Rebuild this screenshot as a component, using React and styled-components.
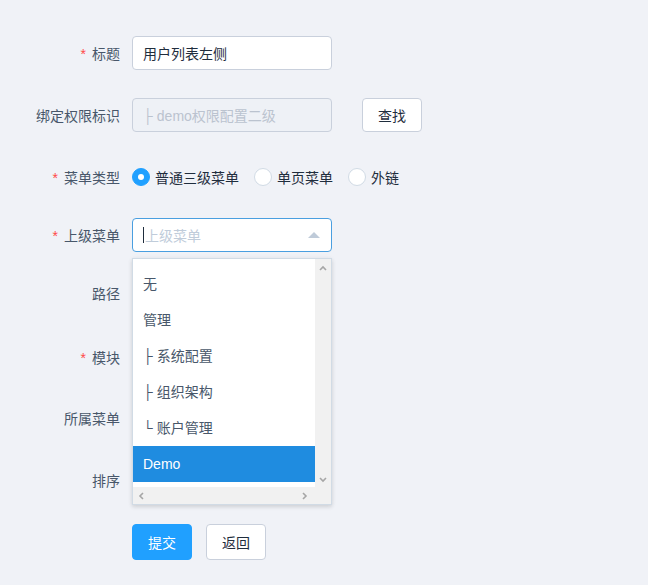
import React from "react"
import styled, { createGlobalStyle } from "styled-components"

const GlobalStyle = createGlobalStyle`
  html, body {
    margin: 0;
    padding: 0;
    background: #f0f2f7;
  }
  body {
    font-family: "Liberation Sans", "Noto Sans CJK SC", sans-serif;
    font-size: 14px;
    color: #1f2d3d;
  }
`

const Page = styled.div`
  padding: 36px 0 0 0;
  width: 648px;
  height: 585px;
  box-sizing: border-box;
  overflow: hidden;
`

const Row = styled.div`
  display: flex;
  align-items: center;
  height: ${p => p.h || 34}px;
  margin-bottom: ${p => p.mb ?? 28}px;
  position: relative;
`

const Label = styled.label`
  width: 120px;
  padding-right: 12px;
  box-sizing: content-box;
  text-align: right;
  color: #48576a;
  font-size: 14px;
  flex-shrink: 0;
  margin-top: ${p => p.dy || 0}px;
`

const Star = styled.span`
  color: #ff4949;
  margin-right: 6px;
`

const Input = styled.div`
  width: 200px;
  height: 34px;
  box-sizing: border-box;
  border: 1px solid ${p => (p.focus ? "#4a9fe0" : "#c9d0dc")};
  border-radius: 4px;
  background: ${p => (p.disabled ? "#eef1f6" : "#fff")};
  color: ${p => (p.disabled ? "#bbc3cf" : "#1f2d3d")};
  padding: 0 10px;
  display: flex;
  align-items: center;
  position: relative;
  font-size: 14px;
`

const Placeholder = styled.span`
  color: #c0ccda;
`

const Cursor = styled.span`
  display: inline-block;
  width: 1px;
  height: 16px;
  background: #1f2d3d;
  margin-right: 1px;
`

const Caret = styled.span`
  position: absolute;
  right: 11px;
  top: 13px;
  width: 0;
  height: 0;
  border-left: 6px solid transparent;
  border-right: 6px solid transparent;
  border-bottom: 6px solid #bfcbd9;
`

const Button = styled.button`
  height: ${p => p.h || 34}px;
  width: 60px;
  margin-left: ${p => p.ml || 0}px;
  border-radius: 4px;
  font-family: inherit;
  font-size: 14px;
  cursor: pointer;
  border: 1px solid ${p => (p.primary ? "#20a0ff" : "#c9d0dc")};
  background: ${p => (p.primary ? "#20a0ff" : "#fff")};
  color: ${p => (p.primary ? "#fff" : "#1f2d3d")};
  padding: 0;
`

const RadioGroup = styled.div`
  display: flex;
  align-items: center;
  margin-top: 3px;
`

const RadioItem = styled.label`
  display: flex;
  align-items: center;
  margin-right: 15px;
  color: #1f2d3d;
  font-size: 14px;
`

const RadioDot = styled.span`
  width: 18px;
  height: 18px;
  box-sizing: border-box;
  border-radius: 50%;
  margin-right: 5px;
  border: 1px solid ${p => (p.on ? "#20a0ff" : "#d1dbe5")};
  background: ${p => (p.on ? "#20a0ff" : "#fff")};
  display: flex;
  align-items: center;
  justify-content: center;
  &::after {
    content: "";
    width: 6px;
    height: 6px;
    border-radius: 50%;
    background: #fff;
    display: ${p => (p.on ? "block" : "none")};
  }
`

const Dropdown = styled.div`
  position: absolute;
  left: 132px;
  top: 40px;
  width: 200px;
  height: 247px;
  box-sizing: border-box;
  border: 1px solid #d1dbe5;
  background: #fff;
  box-shadow: 0 2px 4px rgba(0, 0, 0, 0.12), 0 0 6px rgba(0, 0, 0, 0.04);
  z-index: 10;
  display: grid;
  grid-template-columns: 182px 16px;
  grid-template-rows: 228px 17px;
`

const List = styled.ul`
  list-style: none;
  margin: 0;
  padding: 7px 0 0 0;
  overflow: hidden;
`

const Option = styled.li`
  height: 36px;
  line-height: 36px;
  padding: 0 10px;
  font-size: 14px;
  color: ${p => (p.active ? "#fff" : "#48576a")};
  background: ${p => (p.active ? "#1f8ce0" : "transparent")};
  white-space: nowrap;
`

const VScroll = styled.div`
  background: #f1f1f1;
  display: flex;
  flex-direction: column;
  justify-content: space-between;
  align-items: center;
  padding: 4px 0 2px;
`

const HScroll = styled.div`
  grid-column: 1 / 3;
  background: #f1f1f1;
  display: flex;
  justify-content: space-between;
  align-items: center;
  padding: 0 22px 0 4px;
`

const Chevron = ({ dir }) => {
  const paths = {
    up: "M2 7 L5 4 L8 7",
    down: "M2 3 L5 6 L8 3",
    left: "M6 2 L3 5 L6 8",
    right: "M4 2 L7 5 L4 8",
  }
  return (
    <svg width="10" height="10" viewBox="0 0 10 10">
      <path d={paths[dir]} fill="none" stroke="#a6a6a6" strokeWidth="1.6" />
    </svg>
  )
}

const options = ["无", "管理", "├ 系统配置", "├ 组织架构", "└ 账户管理", "Demo"]

export default function App() {
  return (
    <Page>
      <GlobalStyle />
      <Row>
        <Label><Star>*</Star>标题</Label>
        <Input>用户列表左侧</Input>
      </Row>
      <Row>
        <Label>绑定权限标识</Label>
        <Input disabled>├ demo权限配置二级</Input>
        <Button ml={30}>查找</Button>
      </Row>
      <Row h={30}>
        <Label dy={3}><Star>*</Star>菜单类型</Label>
        <RadioGroup>
          <RadioItem><RadioDot on />普通三级菜单</RadioItem>
          <RadioItem><RadioDot />单页菜单</RadioItem>
          <RadioItem><RadioDot />外链</RadioItem>
        </RadioGroup>
      </Row>
      <Row mb={24}>
        <Label><Star>*</Star>上级菜单</Label>
        <Input focus>
          <Cursor />
          <Placeholder>上级菜单</Placeholder>
          <Caret />
        </Input>
        <Dropdown>
          <List>
            {options.map(o => (
              <Option key={o} active={o === "Demo"}>{o}</Option>
            ))}
          </List>
          <VScroll>
            <Chevron dir="up" />
            <Chevron dir="down" />
          </VScroll>
          <HScroll>
            <Chevron dir="left" />
            <Chevron dir="right" />
          </HScroll>
        </Dropdown>
      </Row>
      <Row mb={30}>
        <Label>路径</Label>
        <Input />
      </Row>
      <Row mb={27}>
        <Label><Star>*</Star>模块</Label>
        <Input />
      </Row>
      <Row>
        <Label>所属菜单</Label>
        <Input />
      </Row>
      <Row mb={27}>
        <Label>排序</Label>
        <Input />
      </Row>
      <Row h={36}>
        <Label />
        <Button primary h={36}>提交</Button>
        <Button h={36} ml={14}>返回</Button>
      </Row>
    </Page>
  )
}
